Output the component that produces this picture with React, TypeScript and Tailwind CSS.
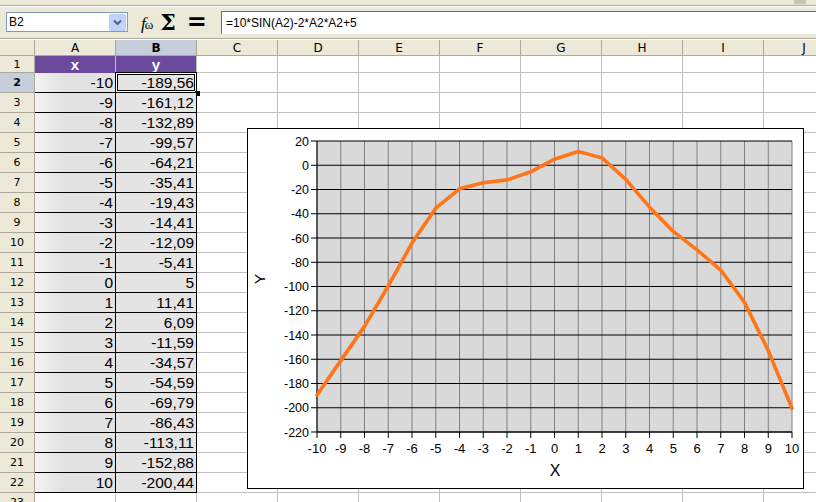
import React from "react";

const XS = [-10,-9,-8,-7,-6,-5,-4,-3,-2,-1,0,1,2,3,4,5,6,7,8,9,10];
const YS = [-189.56,-161.12,-132.89,-99.57,-64.21,-35.41,-19.43,-14.41,-12.09,-5.41,5,11.41,6.09,-11.59,-34.57,-54.59,-69.79,-86.43,-113.11,-152.88,-200.44];
const COLS = ["A","B","C","D","E","F","G","H","I","J"];

function fmt(v: number) {
  if (Number.isInteger(v)) return String(v);
  return v.toFixed(2).replace(".", ",");
}

const px = (x: number) => 69 + (x + 10) * 23.75;
const py = (v: number) => 12 + ((20 - v) * 291) / 240;

function linePoints() {
  return XS.map((x, i) => `${px(x)},${py(YS[i])}`).join(" ");
}

function Chart() {
  const yTicks: number[] = [];
  for (let v = 20; v >= -220; v -= 20) yTicks.push(v);
  return (
    <div className="absolute left-[247px] top-[128px] w-[557px] h-[361px] border border-black bg-white">
      <svg width="555" height="359" viewBox="0 0 555 359" style={{ fontFamily: "'Liberation Sans', Arial, sans-serif" }}>
        <rect x={69} y={12} width={475} height={291} fill="#d9d9d9" />
        {XS.map((x) => (
          <line key={"v" + x} x1={px(x)} y1={12} x2={px(x)} y2={303} stroke="#808080" strokeWidth={1} />
        ))}
        {yTicks.map((v) => (
          <line key={"h" + v} x1={69} y1={py(v)} x2={544} y2={py(v)} stroke="#000" strokeWidth={1} />
        ))}
        <line x1={69} y1={12} x2={69} y2={303} stroke="#000" strokeWidth={1} />
        <line x1={69} y1={303} x2={544} y2={303} stroke="#000" strokeWidth={1} />
        {yTicks.map((v) => (
          <g key={"yt" + v}>
            <line x1={63} y1={py(v)} x2={69} y2={py(v)} stroke="#000" />
            <text x={61} y={py(v) + 4.5} fontSize={12.5} textAnchor="end" fill="#000">{v}</text>
          </g>
        ))}
        {XS.map((x) => (
          <g key={"xt" + x}>
            <line x1={px(x)} y1={303} x2={px(x)} y2={309} stroke="#000" />
            <text x={px(x)} y={324} fontSize={13} textAnchor="middle" fill="#000">{x}</text>
          </g>
        ))}
        <polyline points={linePoints()} fill="none" stroke="#ff7518" strokeWidth={3.6} strokeLinejoin="round" strokeLinecap="round" />
        <text x={22} y={155} fontSize={15} textAnchor="middle" fill="#000" transform="rotate(-90 17 155)">Y</text>
        <text x={307} y={347} fontSize={16} textAnchor="middle" fill="#000">X</text>
      </svg>
    </div>
  );
}

function HeaderCell({ label, sel }: { label: string; sel?: boolean }) {
  return (
    <div
      className={
        "h-[16px] border-r border-b border-[#aca899] flex items-center justify-center text-[12px] leading-none font-['DejaVu_Sans',sans-serif] " +
        (sel ? "bg-[#c5ceda] font-bold text-black" : "bg-[#ece9d8] text-black")
      }
    >
      {label}
    </div>
  );
}

function RowHead({ n, h, sel }: { n: number; h: string; sel?: boolean }) {
  return (
    <div
      className={
        h +
        " border-r border-b border-[#aca899] flex items-center justify-center text-[11px] leading-none font-['DejaVu_Sans',sans-serif] " +
        (sel ? "bg-[#c5ceda] font-bold" : "bg-[#ece9d8]")
      }
    >
      {n}
    </div>
  );
}

export default function App() {
  const rows: React.ReactNode[] = [];
  rows.push(<div key="corner" className="h-[16px] border-r border-b border-[#aca899] bg-[#ece9d8]" />);
  COLS.forEach((c) => rows.push(<HeaderCell key={"h" + c} label={c} sel={c === "B"} />));
  rows.push(<RowHead key="r1" n={1} h="h-[17px]" />);
  rows.push(
    <div key="a1" className="h-[17px] bg-[#6b4a9e] border-r border-[#c9b8ea] border-b border-b-[#6b4a9e] flex items-center justify-center text-white font-bold text-[15px] leading-none">x</div>
  );
  rows.push(
    <div key="b1" className="h-[17px] bg-[#6b4a9e] border-r border-[#c0c0c0] border-b border-b-black flex items-center justify-center text-white font-bold text-[15px] leading-none">y</div>
  );
  for (let c = 2; c < 10; c++) rows.push(<div key={"r1c" + c} className="h-[17px] border-r border-b border-[#c0c0c0]" />);
  for (let r = 2; r <= 23; r++) {
    const h = "h-[20px]";
    rows.push(<RowHead key={"r" + r} n={r} h={h} sel={r === 2} />);
    if (r <= 22) {
      const i = r - 2;
      rows.push(
        <div key={"a" + r} className={h + " border-r border-b border-black bg-[linear-gradient(to_right,#f3f3f3,#e2e2e2_35%,#e2e2e2)] flex items-center justify-end pr-[2px] text-[15.5px] leading-none text-black"}>
          {fmt(XS[i])}
        </div>
      );
      rows.push(
        <div key={"b" + r} className={h + " relative border-r border-b border-black bg-[#e4e4e4] flex items-center justify-end pr-[2px] text-[15.5px] leading-none text-black"}>
          {fmt(YS[i])}
          {r === 2 && (
            <>
              <div className="absolute -left-[1px] -top-[1px] -right-[1px] -bottom-[1px] border border-black" />
              <div className="absolute left-[0px] top-[0px] right-[0px] bottom-[0px] border border-white" />
              <div className="absolute left-[1px] top-[1px] right-[1px] bottom-[1px] border border-black" />
              <div className="absolute -right-[4px] -bottom-[4px] w-[5px] h-[5px] bg-black" />
            </>
          )}
        </div>
      );
    } else {
      rows.push(<div key={"a" + r} className={h + " border-r border-b border-[#c0c0c0]"} />);
      rows.push(<div key={"b" + r} className={h + " border-r border-b border-[#c0c0c0]"} />);
    }
    for (let c = 2; c < 10; c++) rows.push(<div key={"r" + r + "c" + c} className={h + " border-r border-b border-[#c0c0c0]"} />);
  }

  return (
    <div className="relative w-[816px] h-[502px] overflow-hidden bg-white font-['Liberation_Sans',Arial,sans-serif] text-black">
      <div className="relative h-[6px] bg-[#ece9d8] border-b border-[#aca899]">
        <div className="absolute right-[10px] top-0 w-[12px] h-[4px] bg-[#c8c5b6]" />
      </div>
      <div className="h-[1px] bg-white" />
      <div className="h-[32px] bg-[#ece9d8] flex items-start border-b border-[#aca899]">
        <div className="ml-[6px] mt-[5px] w-[122px] h-[20px] bg-white border border-[#7f9db9] flex items-center justify-between">
          <span className="pl-[2px] text-[12px] leading-none">B2</span>
          <div className="w-[17px] h-[17px] mr-[1px] rounded-[2px] bg-[#c3d3fd] border border-[#b9c9ef] flex items-center justify-center">
            <svg width="9" height="7" viewBox="0 0 9 7"><path d="M1 1.5 L4.5 5 L8 1.5" fill="none" stroke="#4d6185" strokeWidth="2" /></svg>
          </div>
        </div>
        <div className="ml-[13px] mt-[6px] flex items-center h-[20px] gap-[8px]">
          <span className="font-['Liberation_Serif',serif] italic text-[17px] leading-none tracking-[-1px]">f<span className="text-[13px] not-italic">ω</span></span>
          <span className="font-['DejaVu_Serif',serif] font-bold text-[22px] leading-none -mt-[2px]">Σ</span>
          <span className="font-['DejaVu_Sans',sans-serif] font-bold text-[24px] leading-none ml-[3px] -mt-[3px]">=</span>
        </div>
        <div className="ml-[14px] mt-[4px] flex-1 h-[23px] bg-white border-t border-l border-[#716f64] flex items-center">
          <span className="pl-[4px] text-[12px] leading-none">=10*SIN(A2)-2*A2*A2+5</span>
        </div>
      </div>
      <div className="h-[1px] bg-white" />
      <div className="grid grid-cols-[35px_repeat(10,81px)]">{rows}</div>
      <Chart />
    </div>
  );
}
